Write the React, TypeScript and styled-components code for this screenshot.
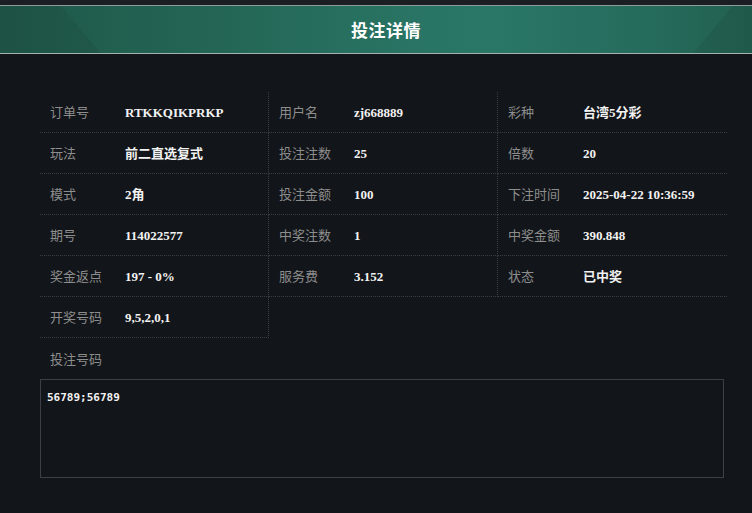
import React from 'react';
import styled, { createGlobalStyle } from 'styled-components';

const GlobalStyle = createGlobalStyle`
    html, body {
        margin: 0;
        padding: 0;
        background: #121519;
    }
`;

const Page = styled.div`
    width: 752px;
    height: 513px;
    overflow: hidden;
    background: #121519;
    border-top: 5px solid #1b1e23;
    box-sizing: border-box;
    font-family: "Noto Sans CJK SC", sans-serif;
`;

const Header = styled.header`
    height: 47px;
    border-top: 1px solid #8e9d9b;
    border-bottom: 1px solid #a4b3b0;
    background:
        linear-gradient(50deg, rgba(0, 0, 0, 0.07) 77px, transparent 77px),
        linear-gradient(310deg, rgba(0, 0, 0, 0.07) 45px, transparent 45px),
        linear-gradient(90deg, #1f5849 0%, #246656 30%, #297464 55%, #2a7767 65%, #256a5b 88%, #22604f 100%);
    display: flex;
    align-items: center;
    justify-content: center;
`;

const Title = styled.h1`
    margin: 0;
    padding-left: 20px;
    font-size: 17px;
    font-weight: bold;
    color: #ffffff;
    letter-spacing: 0.5px;
`;

const Content = styled.div`
    padding: 38px 25px 0 40px;
`;

const Table = styled.div`
    display: grid;
    grid-template-columns: repeat(3, 1fr);
`;

const Cell = styled.div<{ $edge: boolean }>`
    height: 40px;
    line-height: 40px;
    display: flex;
    align-items: baseline;
    padding-left: 10px;
    border-bottom: 1px dotted #3a3e44;
    border-right: ${p => (p.$edge ? '1px dotted #3a3e44' : 'none')};
`;

const Label = styled.span`
    width: 75px;
    flex-shrink: 0;
    font-size: 13px;
    color: #8d8d8d;
`;

const Value = styled.span`
    font-family: "Liberation Serif", "Noto Sans CJK SC", serif;
    font-size: 13px;
    font-weight: bold;
    color: #f2f2f2;
    white-space: nowrap;
`;

const BetLabel = styled.div`
    height: 41px;
    display: flex;
    align-items: center;
    padding-left: 10px;
    font-size: 13px;
    color: #8d8d8d;
`;

const BetBox = styled.div`
    width: 684px;
    height: 99px;
    box-sizing: border-box;
    border: 1px solid #3c3f44;
    padding: 11px 6px;
    font-family: "DejaVu Sans Mono", monospace;
    font-size: 11px;
    font-weight: bold;
    color: #f2f2f2;
`;

const fields: [string, string][] = [
    ['订单号', 'RTKKQIKPRKP'],
    ['用户名', 'zj668889'],
    ['彩种', '台湾5分彩'],
    ['玩法', '前二直选复式'],
    ['投注注数', '25'],
    ['倍数', '20'],
    ['模式', '2角'],
    ['投注金额', '100'],
    ['下注时间', '2025-04-22 10:36:59'],
    ['期号', '114022577'],
    ['中奖注数', '1'],
    ['中奖金额', '390.848'],
    ['奖金返点', '197 - 0%'],
    ['服务费', '3.152'],
    ['状态', '已中奖'],
    ['开奖号码', '9,5,2,0,1'],
];

const App = () => {
    return (
        <Page>
            <GlobalStyle />
            <Header>
                <Title>投注详情</Title>
            </Header>
            <Content>
                <Table>
                    {fields.map(([label, value], i) => (
                        <Cell key={label} $edge={i % 3 !== 2}>
                            <Label>{label}</Label>
                            <Value>{value}</Value>
                        </Cell>
                    ))}
                </Table>
                <BetLabel>投注号码</BetLabel>
                <BetBox>56789;56789</BetBox>
            </Content>
        </Page>
    );
};

export default App;
